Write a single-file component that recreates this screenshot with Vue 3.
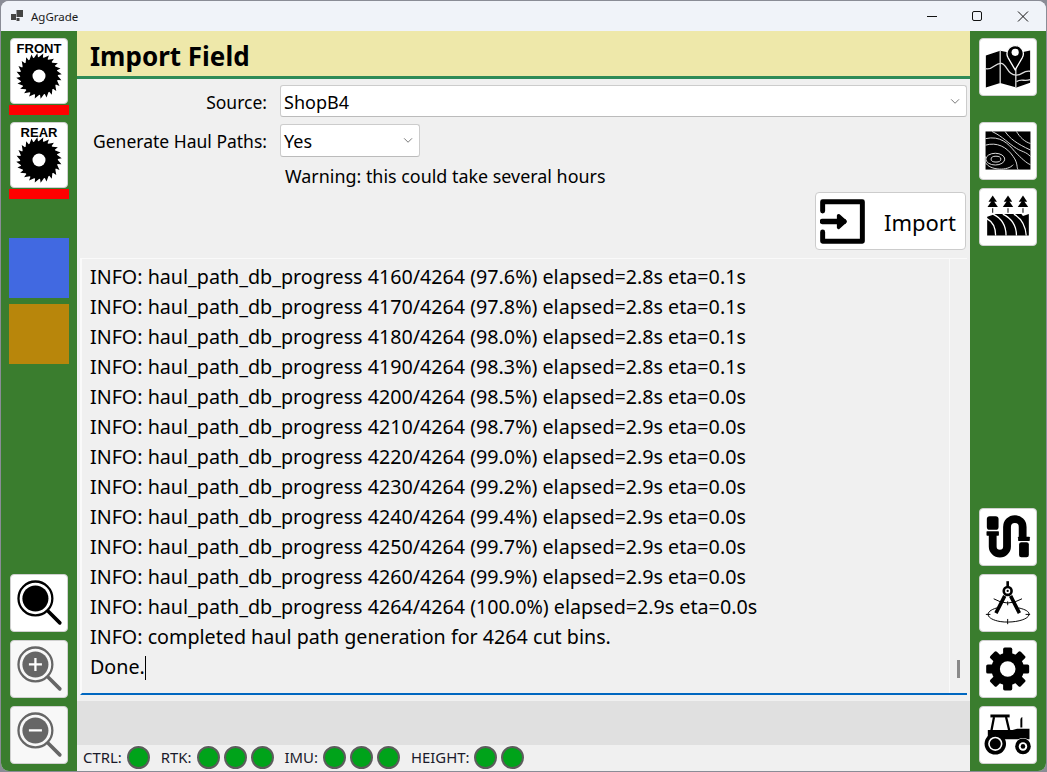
<script setup>
const rows = [
  ['4160', '97.6', '2.8', '0.1'], ['4170', '97.8', '2.8', '0.1'], ['4180', '98.0', '2.8', '0.1'],
  ['4190', '98.3', '2.8', '0.1'], ['4200', '98.5', '2.8', '0.0'], ['4210', '98.7', '2.9', '0.0'],
  ['4220', '99.0', '2.9', '0.0'], ['4230', '99.2', '2.9', '0.0'], ['4240', '99.4', '2.9', '0.0'],
  ['4250', '99.7', '2.9', '0.0'], ['4260', '99.9', '2.9', '0.0'], ['4264', '100.0', '2.9', '0.0'],
]
const lines = rows.map(r => `INFO: haul_path_db_progress ${r[0]}/4264 (${r[1]}%) elapsed=${r[2]}s eta=${r[3]}s`)
lines.push('INFO: completed haul path generation for 4264 cut bins.')

function sawPath(cx, cy, ro, ri, n) {
  let d = ''
  for (let i = 0; i < n; i++) {
    const a = (i / n) * Math.PI * 2
    const b = ((i + 0.72) / n) * Math.PI * 2
    const x0 = cx + ri * Math.cos(a), y0 = cy + ri * Math.sin(a)
    const x1 = cx + ro * Math.cos(b), y1 = cy + ro * Math.sin(b)
    const x2 = cx + ri * Math.cos(b + 0.02), y2 = cy + ri * Math.sin(b + 0.02)
    d += `${i ? 'L' : 'M'}${x0.toFixed(1)} ${y0.toFixed(1)}L${x1.toFixed(1)} ${y1.toFixed(1)}L${x2.toFixed(1)} ${y2.toFixed(1)}`
  }
  return d + 'Z'
}
const saw = sawPath(86, 70, 70, 58, 24)
const gearTeeth = [0, 45, 90, 135, 180, 225, 270, 315]
const status = [
  { label: 'CTRL:', n: 1 }, { label: 'RTK:', n: 3 }, { label: 'IMU:', n: 3 }, { label: 'HEIGHT:', n: 2 },
]
</script>

<template>
  <div class="desk">
    <div class="window">
      <header class="titlebar">
        <svg class="appicon" viewBox="0 0 12 12"><rect x="0" y="4" width="5" height="6" fill="#444"/><rect x="5.5" y="0" width="6.5" height="7" fill="#444"/><rect x="5.5" y="8" width="3" height="3" fill="#444"/></svg>
        <span class="apptitle">AgGrade</span>
        <div class="controls">
          <svg viewBox="0 0 46 31" class="ctl"><path d="M19 15.5H29" stroke="#111" stroke-width="1"/></svg>
          <svg viewBox="0 0 46 31" class="ctl"><rect x="18.5" y="10.5" width="9" height="9" rx="1.5" fill="none" stroke="#111" stroke-width="1"/></svg>
          <svg viewBox="0 0 46 31" class="ctl"><path d="M18 10.5L28 20.5M28 10.5L18 20.5" stroke="#111" stroke-width="1"/></svg>
        </div>
      </header>

      <div class="main">
        <aside class="rail">
          <div class="sawgroup">
            <button class="tool saw"><span class="sawlabel">FRONT</span>
              <svg viewBox="0 0 172 140" class="sawicon"><path :d="saw" fill="#000"/><circle cx="86" cy="70" r="20" fill="#fff"/></svg>
            </button>
            <div class="redbar"></div>
          </div>
          <div class="sawgroup second">
            <button class="tool saw"><span class="sawlabel">REAR</span>
              <svg viewBox="0 0 172 140" class="sawicon"><path :d="saw" fill="#000"/><circle cx="86" cy="70" r="20" fill="#fff"/></svg>
            </button>
            <div class="redbar"></div>
          </div>
          <div class="swatch blue"></div>
          <div class="swatch brown"></div>
          <div class="spacer"></div>
          <button class="tool">
            <svg viewBox="0 0 172 172" class="ico">
              <circle cx="75" cy="72" r="52" fill="none" stroke="#000" stroke-width="7"/><circle cx="75" cy="72" r="40" fill="#000"/>
              <path d="M115 112L150 147" stroke="#000" stroke-width="11" stroke-linecap="round"/>
            </svg>
          </button>
          <button class="tool off">
            <svg viewBox="0 0 172 172" class="ico">
              <circle cx="75" cy="72" r="52" fill="none" stroke="#666" stroke-width="7"/><circle cx="75" cy="72" r="40" fill="#666"/>
              <path d="M115 112L150 147" stroke="#666" stroke-width="11" stroke-linecap="round"/>
              <path d="M55 72H95M75 52V92" stroke="#fff" stroke-width="7"/>
            </svg>
          </button>
          <button class="tool off">
            <svg viewBox="0 0 172 172" class="ico">
              <circle cx="75" cy="72" r="52" fill="none" stroke="#666" stroke-width="7"/><circle cx="75" cy="72" r="40" fill="#666"/>
              <path d="M115 112L150 147" stroke="#666" stroke-width="11" stroke-linecap="round"/>
              <path d="M55 72H95" stroke="#fff" stroke-width="7"/>
            </svg>
          </button>
        </aside>

        <main class="center">
          <h1 class="heading">Import Field</h1>
          <div class="form">
            <div class="row first">
              <label class="lbl">Source:</label>
              <div class="select wide"><span>ShopB4</span><svg viewBox="0 0 12 8" class="chev"><path d="M1 1.5L5.5 6L10 1.5" fill="none" stroke="#666" stroke-width="1"/></svg></div>
            </div>
            <div class="row second">
              <label class="lbl">Generate Haul Paths:</label>
              <div class="select short"><span>Yes</span><svg viewBox="0 0 12 8" class="chev"><path d="M1 1.5L5.5 6L10 1.5" fill="none" stroke="#666" stroke-width="1"/></svg></div>
            </div>
            <p class="warning">Warning: this could take several hours</p>
            <div class="actions">
              <button class="importbtn">
                <svg viewBox="0 0 136 136" class="importicon">
                  <path d="M8 36V8H128V128H8V100" fill="none" stroke="#000" stroke-width="15" stroke-linejoin="round" stroke-linecap="round"/>
                  <path d="M7 68H72" fill="none" stroke="#000" stroke-width="16" stroke-linecap="round"/>
                  <path d="M56 50L76 68L56 86Z" fill="#000" stroke="#000" stroke-width="10" stroke-linejoin="round"/>
                </svg>
                <span>Import</span>
              </button>
            </div>
          </div>
          <div class="log">
            <div class="logtext">
              <div v-for="l in lines" :key="l" class="logline">{{ l }}</div>
              <div class="logline">Done.<span class="caret"></span></div>
            </div>
            <div class="scroll"><div class="thumb"></div></div>
          </div>
          <div class="band"></div>
          <footer class="status">
            <div v-for="s in status" :key="s.label" class="group">
              <span class="slabel">{{ s.label }}</span>
              <span v-for="i in s.n" :key="i" class="led"></span>
            </div>
          </footer>
        </main>

        <aside class="rail">
          <button class="tool">
            <svg viewBox="538 115 172 172" class="ico">
              <path d="M556 166L600 151L646 160L692 150V249L650 264L600 250L556 264Z" fill="#000"/>
              <path d="M600 150V250M648 205V264" stroke="#ddd" stroke-width="4" fill="none"/>
              <path d="M556 206C578 212 585 186 604 190C622 194 622 226 650 226C670 226 668 211 692 214M650 246C665 236 672 246 692 240" stroke="#ddd" stroke-width="4" fill="none"/>
              <path d="M646 210L624 172A25 25 0 1 1 668 172Z" fill="#000" stroke="#fff" stroke-width="4"/>
              <circle cx="646" cy="156" r="11" fill="#fff"/>
            </svg>
          </button>
          <button class="tool gap1">
            <svg viewBox="538 367 172 172" class="ico">
              <rect x="555" y="393" width="138" height="117" fill="#000"/>
              <g fill="none" stroke="#ddd" stroke-width="3">
                <ellipse cx="585" cy="478" rx="29" ry="18"/><ellipse cx="587" cy="478" rx="15" ry="9"/>
                <path d="M555 435C590 425 620 440 640 470C655 490 650 505 655 510"/>
                <path d="M555 415C600 405 625 430 645 455C665 475 680 490 693 495"/>
                <path d="M575 393C610 410 625 430 650 445C665 455 680 455 693 470"/>
                <path d="M615 393C630 415 650 430 693 450"/>
                <path d="M650 393C660 410 675 425 693 430"/>
                <path d="M555 470C540 510 620 520 640 495"/>
              </g>
            </svg>
          </button>
          <button class="tool">
            <svg viewBox="538 565 172 172" class="ico">
              <g v-for="x in [577, 624, 670]" :key="x" fill="#000">
                <path :d="`M${x} 585L${x+13} 604H${x-13}Z`"/><path :d="`M${x} 597L${x+16} 620H${x-16}Z`"/>
                <rect :x="x-1.5" y="624" width="3" height="14"/>
              </g>
              <path d="M560 650L585 642H665L670 648L688 642V708H560Z" fill="#000"/>
              <g fill="none" stroke="#fff" stroke-width="4">
                <path d="M559 656C578 666 586 685 586 708"/><path d="M578 642C605 655 618 680 618 708"/>
                <path d="M608 642C635 655 650 680 650 708"/><path d="M642 642C665 655 678 680 680 708"/>
              </g>
            </svg>
          </button>
          <div class="spacer"></div>
          <button class="tool">
            <svg viewBox="238 25 172 172" class="ico">
              <path d="M277 100V140A22 22 0 0 0 321 140V80A24 24 0 0 1 369 80V112" fill="none" stroke="#000" stroke-width="24"/>
              <rect x="259" y="47" width="36" height="42" rx="9" fill="#000"/><rect x="258" y="93" width="38" height="14" rx="2" fill="#000"/>
              <rect x="355" y="110" width="36" height="13" rx="2" fill="#000"/><rect x="358" y="127" width="30" height="46" rx="7" fill="#000"/>
            </svg>
          </button>
          <button class="tool">
            <svg viewBox="238 223 172 172" class="ico">
              <rect x="319" y="242" width="8" height="16" fill="#000"/>
              <circle cx="323" cy="272" r="16" fill="#000"/><circle cx="323" cy="272" r="8" fill="#fff"/><circle cx="323" cy="272" r="3.5" fill="#000"/>
              <path d="M314 287L287 340M332 287L359 340" stroke="#000" stroke-width="11"/>
              <g fill="none" stroke="#000" stroke-width="3">
                <path d="M280 296Q323 322 367 296"/>
                <path d="M290 324C250 335 255 358 300 366C340 372 395 360 388 340C385 332 370 327 356 324"/>
                <path d="M256 344H270M378 344H392M323 358V374M323 304V316"/>
              </g>
            </svg>
          </button>
          <button class="tool">
            <svg viewBox="0 0 172 172" class="ico">
              <g fill="#000">
                <rect v-for="t in gearTeeth" :key="t" x="71" y="20" width="28" height="30" rx="5" :transform="`rotate(${t} 85 86)`"/>
                <circle cx="85" cy="86" r="50"/>
              </g>
              <circle cx="85" cy="86" r="24" fill="#fff"/>
            </svg>
          </button>
          <button class="tool">
            <svg viewBox="238 619 172 172" class="ico">
              <path d="M270 642H329V651H270Z" fill="#000"/>
              <path d="M281 650L273 692M318 650L328 692" stroke="#000" stroke-width="7"/>
              <path d="M262 690H338L352 686H390V718H262Z" fill="#000"/>
              <path d="M362 682V658Q362 652 368 650V682Z" fill="#000"/>
              <circle cx="285" cy="732" r="33" fill="#000"/><circle cx="285" cy="732" r="22" fill="#fff"/><circle cx="285" cy="732" r="17" fill="#000"/>
              <circle cx="370" cy="740" r="26" fill="#fff"/><circle cx="370" cy="740" r="24" fill="#000"/><circle cx="370" cy="740" r="13" fill="#fff"/><circle cx="370" cy="740" r="7" fill="#000"/>
            </svg>
          </button>
        </aside>
      </div>
    </div>
  </div>
</template>

<style>
html, body { margin: 0; padding: 0; background: #8a8c96; }
</style>

<style scoped>
.desk {
  width: 1047px; height: 772px; overflow: hidden; background: #8a8c96;
  font-family: "Noto Sans", "Open Sans", sans-serif; color: #000;
}
.window {
  width: 1045px; height: 770px; margin-left: 1px; margin-top: 1px;
  border-radius: 8px; overflow: hidden; display: flex; flex-direction: column; background: #f0f0f0;
}
.titlebar { height: 30px; flex: none; display: flex; align-items: center; background: #f0f3f9; }
.appicon { width: 12px; height: 12px; margin-left: 10px; }
.apptitle { margin-left: 8px; font-size: 11.5px; color: #1a1a1a; }
.controls { margin-left: auto; display: flex; }
.ctl { width: 46px; height: 31px; display: block; }
.main { flex: 1; display: flex; min-height: 0; }
.rail {
  width: 76px; flex: none; background: #3a7d2e; display: flex; flex-direction: column;
  align-items: center; padding: 7px 0; box-sizing: border-box; gap: 8px;
}
.spacer { flex: 1; }
.tool {
  width: 58px; height: 58px; padding: 0; box-sizing: border-box; flex: none; display: block;
  background: #fff; border: 1px solid #d0d0d0; border-radius: 4px;
}
.tool.off { background: #f8f8f8; }
.gap1 { margin-top: 18px; }
.ico { display: block; width: 56px; height: 56px; }
.sawgroup { display: flex; flex-direction: column; align-items: center; gap: 1px; }
.sawgroup.second { margin-top: -1px; margin-bottom: 31px; }
.saw { height: 66px; display: flex; flex-direction: column; align-items: center; }
.sawlabel { font: bold 13px/15px "Liberation Sans", sans-serif; margin-top: 2px; flex: none; }
.sawicon { display: block; width: 56px; height: 46px; margin-top: -3px; flex: none; }
.redbar { width: 60px; height: 10px; background: #ff0000; }
.swatch { width: 60px; height: 60px; }
.blue { background: #4169e1; }
.brown { background: #b8860b; margin-top: -2px; }
.center { flex: 1; min-width: 0; display: flex; flex-direction: column; background: #f0f0f0; }
.heading {
  margin: 0; height: 45px; flex: none; background: #eee8aa; border-bottom: 3px solid #2e8b57;
  padding-left: 13px; font-size: 26px; font-weight: 700; line-height: 50px; box-sizing: content-box;
}
.form { padding: 6px 3px 0 0; flex: none; }
.row { display: flex; align-items: center; height: 32px; }
.row.first .lbl, .row.first .select span { padding-top: 2px; }
.row.second { margin-top: 7px; height: 33px; }
.lbl { width: 190px; text-align: right; font-size: 17.5px; margin-right: 13px; flex: none; white-space: nowrap; }
.select {
  height: 100%; box-sizing: border-box; background: #fff; border: 1px solid #ccc; border-bottom-color: #bbb;
  border-radius: 3px; display: flex; align-items: center; justify-content: space-between;
  padding: 0 5px 0 3px; font-size: 18px;
}
.wide { flex: 1; }
.short { width: 140px; }
.chev { width: 11px; height: 7px; }
.warning { margin: 7px 0 0 208px; font-size: 17.9px; line-height: 24px; white-space: nowrap; }
.actions { display: flex; justify-content: flex-end; margin-top: 4px; padding-right: 1px; }
.importbtn {
  width: 151px; height: 58px; box-sizing: border-box; background: #fff; border: 1px solid #ccc; border-radius: 4px;
  display: flex; align-items: center; padding: 0 0 0 4px; font-family: inherit; font-size: 22px; color: #000;
}
.importicon { width: 45px; height: 45px; flex: none; }
.importbtn span { margin-left: 19px; padding-top: 2px; }
.log {
  margin: 8px 3px 0 3px; height: 437px; flex: none; box-sizing: border-box; display: flex;
  border-top: 1px solid #fafafa; border-left: 2px solid #fafafa; border-bottom: 2px solid #0067c0;
  background: #f0f0f0; overflow: hidden;
}
.logtext { flex: 1; padding: 3px 0 0 8px; font-size: 19.7px; line-height: 30px; white-space: nowrap; min-width: 0; }
.logline { height: 30px; }
.caret { display: inline-block; width: 1px; height: 24px; background: #000; vertical-align: -6px; }
.scroll {
  width: 18px; flex: none; border-left: 1px solid #fafafa; display: flex; flex-direction: column;
  justify-content: flex-end; align-items: center; padding-bottom: 15px; box-sizing: border-box;
}
.thumb { width: 3px; height: 18px; background: #8a8a8a; }
.band { height: 44px; flex: none; margin-top: 6px; background: #e0e0e0; }
.status { flex: 1; display: flex; align-items: center; padding: 0 0 2px 6px; gap: 11px; background: #f0f0f0; }
.group { display: flex; align-items: center; gap: 4px; }
.slabel { font-size: 14.9px; color: #1a1a2a; margin-right: 1px; }
.led {
  width: 23px; height: 23px; box-sizing: border-box; border-radius: 50%; background: #00a31a;
  border: 2px solid #5c5c5c; display: block;
}
</style>
